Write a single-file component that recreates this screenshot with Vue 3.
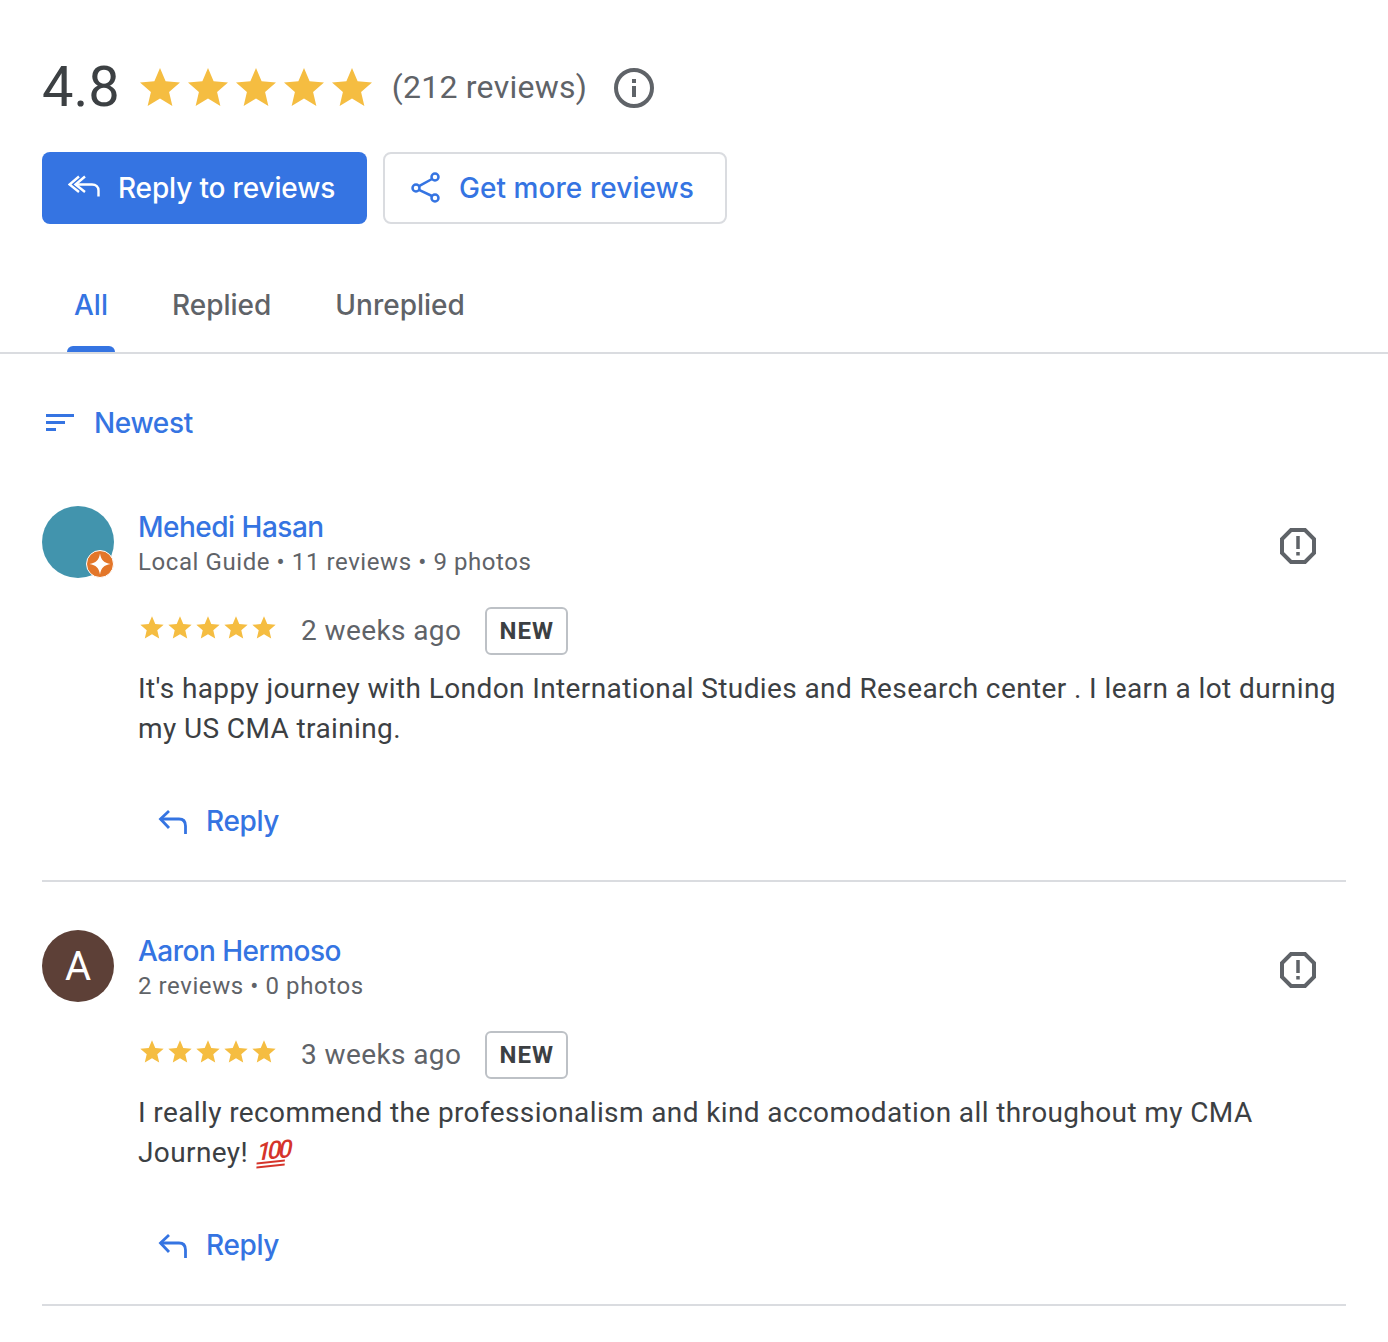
<script setup>
const starPath = 'M12 17.27L18.18 21l-1.64-7.03L22 9.24l-7.19-.61L12 2 9.19 8.63 2 9.24l5.46 4.73L5.82 21z'

const reviews = [
  {
    id: 1,
    name: 'Mehedi Hasan',
    meta: 'Local Guide • 11 reviews • 9 photos',
    guide: true,
    when: '2 weeks ago',
    text: "It's happy journey with London International Studies and Research center . I learn a lot durning my US CMA training."
  },
  {
    id: 2,
    name: 'Aaron Hermoso',
    meta: '2 reviews • 0 photos',
    initial: 'A',
    when: '3 weeks ago',
    text: 'I really recommend the professionalism and kind accomodation all throughout my CMA Journey!',
    hundred: true
  }
]
</script>

<template>
  <div class="page">
    <header class="summary">
      <span class="score">4.8</span>
      <div class="stars">
        <svg v-for="n in 5" :key="n" viewBox="0 0 24 24"><path :d="starPath" /></svg>
      </div>
      <span class="count">(212 reviews)</span>
      <svg class="info" viewBox="0 0 40 40">
        <circle cx="20" cy="20" r="18" fill="none" stroke="#5f6368" stroke-width="4" />
        <rect x="18" y="18" width="4" height="11" fill="#5f6368" />
        <rect x="18" y="11" width="4" height="4" fill="#5f6368" />
      </svg>
    </header>

    <div class="actions">
      <button class="btn primary">
        <svg viewBox="0 0 32 32" fill="none" stroke="#fff" stroke-width="2.400">
          <path d="M11 4.500L1.500 12.500 11 20" />
          <path d="M17 4.500L7.500 12.500 17 20" />
          <path d="M7.500 12.500H24c4 0 6.500 2.500 6.500 6v6" />
        </svg>
        <span class="tight">Reply to reviews</span>
      </button>
      <button class="btn outline">
        <svg viewBox="0 0 32 32" fill="none" stroke="#3574e2" stroke-width="2.500">
          <circle cx="24" cy="5" r="3.500" />
          <circle cx="5" cy="16" r="3.500" />
          <circle cx="24" cy="26" r="3.500" />
          <path d="M8 14.200L21 7M8 17.800L21 24" />
        </svg>
        <span class="wide">Get more reviews</span>
      </button>
    </div>

    <nav class="tabs">
      <a class="tab active">All</a>
      <a class="tab">Replied</a>
      <a class="tab">Unreplied</a>
    </nav>

    <div class="sort">
      <svg viewBox="0 0 28 18" fill="#3574e2">
        <rect x="0" y="0" width="28" height="3" />
        <rect x="0" y="7" width="19" height="3" />
        <rect x="0" y="14" width="10" height="3" />
      </svg>
      <span class="tight-more">Newest</span>
    </div>

    <article v-for="r in reviews" :key="r.id" class="review">
      <div class="top">
        <div class="avatar" :class="{ teal: r.guide }">
          {{ r.initial }}
          <svg v-if="r.guide" class="guide" viewBox="0 0 28 28">
            <circle cx="14" cy="14" r="13.500" fill="#e37629" stroke="#fff" stroke-width="1" />
            <path d="M14 3.500C15 10 18 13 24.500 14 18 15 15 18 14 24.500 13 18 10 15 3.500 14 10 13 13 10 14 3.500z" fill="#fff" />
          </svg>
        </div>
        <div class="who">
          <a class="name">{{ r.name }}</a>
          <span class="meta">{{ r.meta }}</span>
        </div>
        <svg class="flag" viewBox="0 0 36 36">
          <path d="M11 2H25L34 11V25L25 34H11L2 25V11z" fill="none" stroke="#5f6368" stroke-width="4" />
          <rect x="16.250" y="8" width="3.500" height="13" fill="#5f6368" />
          <rect x="16.250" y="24" width="3.500" height="3.500" fill="#5f6368" />
        </svg>
      </div>

      <div class="body">
        <div class="line">
          <div class="stars small">
            <svg v-for="n in 5" :key="n" viewBox="0 0 24 24"><path :d="starPath" /></svg>
          </div>
          <span class="when">{{ r.when }}</span>
          <span class="badge">NEW</span>
        </div>
        <p class="text">{{ r.text }} <span v-if="r.hundred" class="hundred">100</span></p>
        <a class="reply">
          <svg viewBox="0 0 32 32" fill="none" stroke="#3574e2" stroke-width="2.800">
            <path d="M12 6L3.500 14 12 23" />
            <path d="M3.500 14H22c4 0 6.500 2.500 6.500 7v8" />
          </svg>
          <span class="tight-more">Reply</span>
        </a>
      </div>
    </article>
  </div>
</template>

<style>
body {
  background: #fff;
}
</style>

<style scoped>
.page {
  width: 1388px;
  padding: 56px 0 37px;
  box-sizing: border-box;
  font-family: Roboto, "Liberation Sans", sans-serif;
  color: #3c4043;
}

.summary {
  display: flex;
  align-items: center;
  height: 64px;
  padding-left: 42px;
}

.score {
  font-size: 56px;
  line-height: 64px;
  margin-bottom: 2px;
  color: #3c4043;
}

.stars {
  display: flex;
  margin-left: 16px;
}

.stars svg {
  width: 48px;
  height: 48px;
  fill: #f5bd41;
}

.count {
  margin: 0 0 2px 16px;
  font-size: 32px;
  letter-spacing: 0.25px;
  color: #5f6368;
}

.info {
  width: 40px;
  height: 40px;
  margin-left: 27px;
}

.actions {
  display: flex;
  gap: 16px;
  margin: 32px 0 0 42px;
}

.btn {
  display: flex;
  align-items: center;
  height: 72px;
  box-sizing: border-box;
  border-radius: 8px;
  font-family: Inter, Roboto, sans-serif;
  font-size: 28px;
  font-weight: 500;
  background: #fff;
  padding: 0;
}

.btn svg {
  width: 32px;
  height: 32px;
}

.tight {
  letter-spacing: -0.15px;
}

.tight-more {
  letter-spacing: -0.35px;
}

.wide {
  letter-spacing: 0.06px;
}

.primary {
  width: 325px;
  border: none;
  background: #3574e2;
  color: #fff;
  padding-left: 26px;
  gap: 18px;
}

.outline {
  width: 344px;
  border: 2px solid #dadce0;
  color: #3574e2;
  padding-left: 26px;
  gap: 16px;
}

.tabs {
  display: flex;
  height: 130px;
  padding-left: 42px;
  border-bottom: 2px solid #dadce0;
  box-sizing: border-box;
}

.tab {
  position: relative;
  padding: 0 32px;
  font-family: Inter, Roboto, sans-serif;
  font-size: 28px;
  font-weight: 500;
  line-height: 162px;
  height: 128px;
  color: #5f6368;
}

.tab.active {
  color: #3574e2;
}

.tab.active::after {
  content: "";
  position: absolute;
  left: 25px;
  right: 25px;
  bottom: 0;
  height: 6px;
  background: #3574e2;
  border-radius: 6px 6px 0 0;
}

.sort {
  display: flex;
  align-items: center;
  gap: 20px;
  height: 40px;
  margin: 49px 0 0 46px;
  font-family: Inter, Roboto, sans-serif;
  font-size: 28px;
  font-weight: 500;
  color: #3574e2;
}

.sort svg {
  width: 28px;
  height: 18px;
}

.review {
  margin: 0 42px;
  padding-top: 48px;
  height: 424px;
  box-sizing: border-box;
  border-bottom: 2px solid #dadce0;
}

.sort + .review {
  padding-top: 63px;
  height: 439px;
}

.top {
  display: flex;
  align-items: flex-start;
}

.avatar {
  position: relative;
  flex: none;
  display: flex;
  align-items: center;
  justify-content: center;
  width: 72px;
  height: 72px;
  border-radius: 50%;
  background: #5d4037;
  color: #fff;
  font-size: 40px;
}

.avatar.teal {
  background: #4294ad;
}

.guide {
  position: absolute;
  right: 0;
  bottom: 0;
  width: 28px;
  height: 28px;
}

.who {
  display: flex;
  flex-direction: column;
  flex: 1;
  margin-left: 24px;
  padding-top: 1px;
}

.name {
  font-family: Inter, Roboto, sans-serif;
  font-size: 28px;
  font-weight: 500;
  line-height: 40px;
  letter-spacing: -0.5px;
  color: #3574e2;
}

.meta {
  font-size: 24px;
  line-height: 30px;
  letter-spacing: 0.58px;
  color: #5f6368;
}

.flag {
  width: 36px;
  height: 36px;
  margin: 22px 30px 0 0;
}

.body {
  margin: 29px 0 0 96px;
}

.line {
  display: flex;
  align-items: center;
  height: 48px;
}

.stars.small {
  margin-left: 0;
  margin-top: -6px;
}

.stars.small svg {
  width: 28px;
  height: 28px;
}

.when {
  margin: 0 0 2px 23px;
  font-size: 28px;
  letter-spacing: 0.4px;
  color: #5f6368;
}

.badge {
  display: flex;
  align-items: center;
  justify-content: center;
  width: 83px;
  height: 48px;
  margin-left: 24px;
  box-sizing: border-box;
  border: 2px solid #bdc1c6;
  border-radius: 6px;
  font-size: 24px;
  font-weight: 700;
  letter-spacing: 1px;
  color: #3c4043;
}

.text {
  margin: 14px 0 0;
  font-size: 28px;
  line-height: 40px;
  letter-spacing: 0.39px;
  color: #3c4043;
}

.hundred {
  display: inline-block;
  width: 28px;
  font-size: 25px;
  line-height: 21px;
  font-style: italic;
  font-weight: 500;
  letter-spacing: -3px;
  color: #d5342a;
  border-bottom: 6px double #d5342a;
  transform: skewX(-8deg) rotate(-6deg);
  margin-left: 2px;
  vertical-align: 3px;
}

.reply {
  display: flex;
  align-items: center;
  gap: 17px;
  height: 40px;
  margin: 52px 0 0 19px;
  font-family: Inter, Roboto, sans-serif;
  font-size: 28px;
  font-weight: 500;
  color: #3574e2;
}

.reply svg {
  width: 32px;
  height: 32px;
}
</style>
